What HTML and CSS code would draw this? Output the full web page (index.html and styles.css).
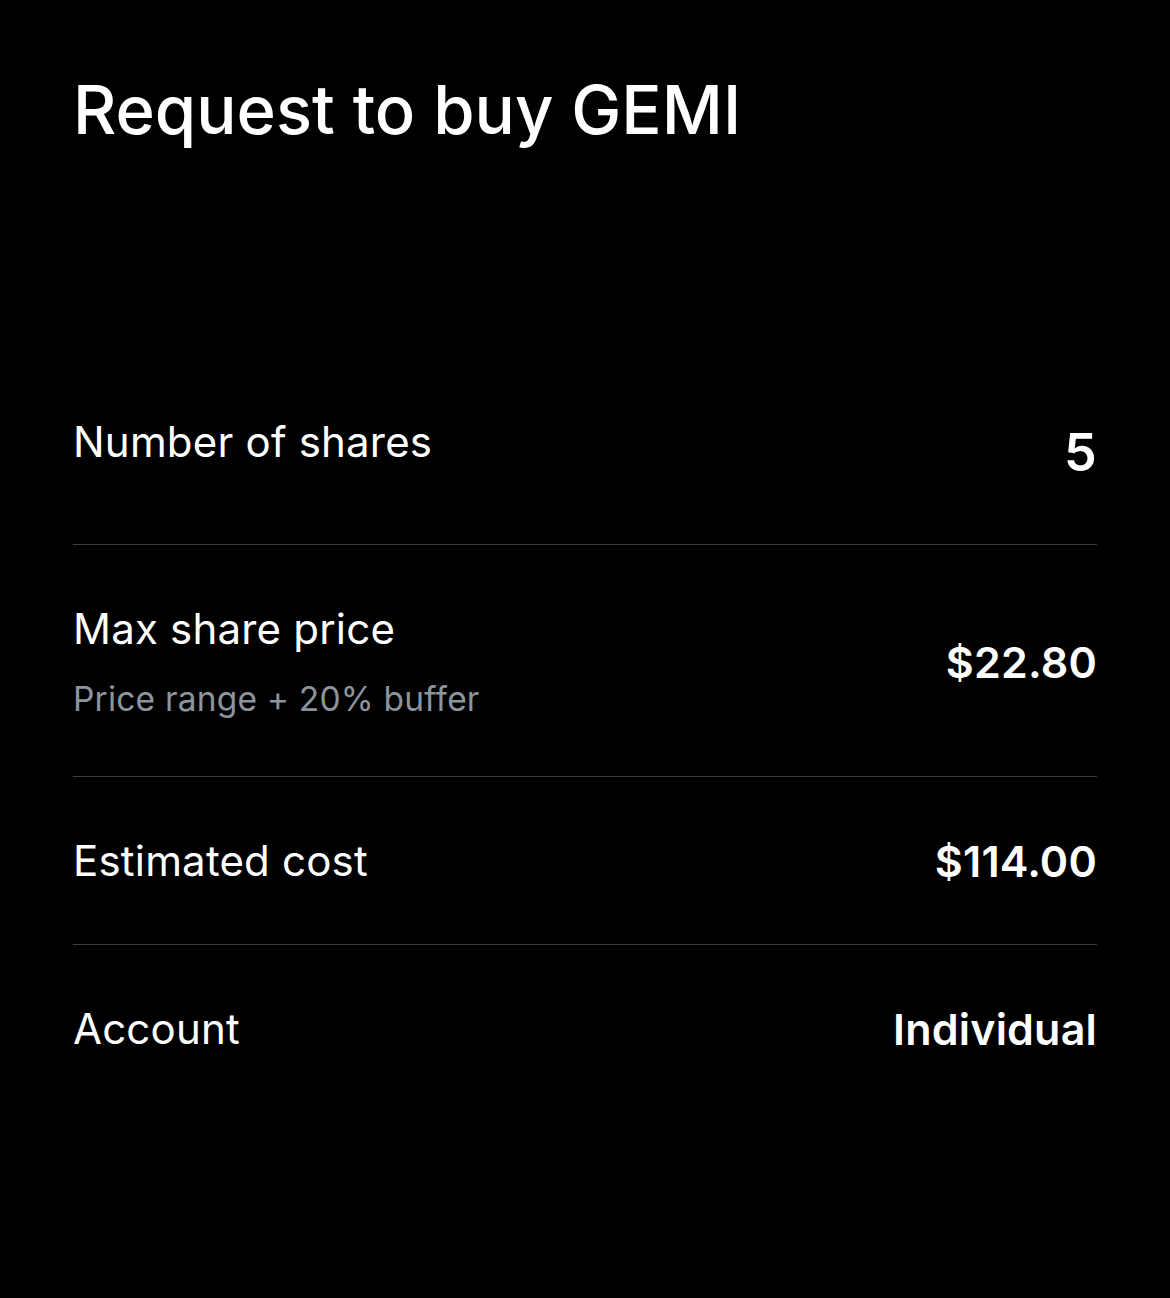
FILE: index.html
```html
<!DOCTYPE html>
<html lang="en">
<head>
<meta charset="UTF-8">
<meta name="viewport" content="width=device-width, initial-scale=1.0">
<title>Request to buy GEMI</title>
<link rel="stylesheet" href="styles.css">
</head>
<body>
<div class="page">
<h1 class="title">Request to buy GEMI</h1>

<div class="details">
<div class="row row-first">
<div class="label">Number of shares</div>
<div class="value value-big">5</div>
</div>

<div class="row row-sub">
<div>
<div class="label">Max share price</div>
<div class="sub">Price range + 20% buffer</div>
</div>
<div class="value">$22.80</div>
</div>

<div class="row">
<div class="label">Estimated cost</div>
<div class="value">$114.00</div>
</div>

<div class="row row-last">
<div class="label">Account</div>
<div class="value">Individual</div>
</div>
</div>
</div>
</body>
</html>
```

FILE: styles.css
```css
body {
margin: 0;
background-color: #000;
color: #fff;
font-family: Inter, "Noto Sans", sans-serif;
}

.page {
padding: 70px 73px 0;
min-height: 1298px;
box-sizing: border-box;
}

.title {
margin: 0;
font-size: 67px;
line-height: 80px;
font-weight: 500;
}

.details {
margin-top: 197px;
}

.row {
display: flex;
justify-content: space-between;
align-items: center;
padding: 60px 0 59px;
border-bottom: 1px solid #3a3a3f;
}

.row-first {
padding-bottom: 67px;
}

.row-sub {
padding-bottom: 57px;
}

.row-last {
border-bottom: none;
}

.label {
font-size: 42px;
line-height: 48px;
font-weight: 400;
letter-spacing: 0.2px;
}

.sub {
margin-top: 26px;
font-size: 33.5px;
line-height: 40px;
color: #8c959d;
letter-spacing: 0.2px;
}

.value {
font-size: 43px;
line-height: 48px;
font-weight: 600;
letter-spacing: 0.2px;
}

.value-big {
font-size: 52px;
margin-top: 22px;
}
```
